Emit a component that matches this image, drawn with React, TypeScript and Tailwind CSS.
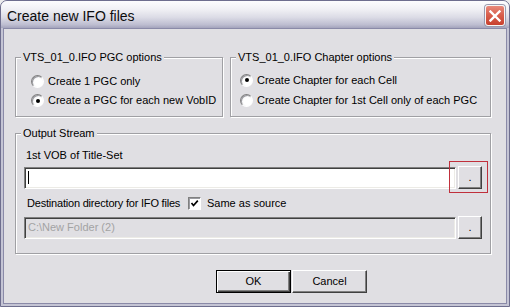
import React from "react";

const FONT = "font-['Liberation_Sans',Arial,sans-serif]";

function Radio({ checked, label }: { checked?: boolean; label: string }) {
  return (
    <div className="flex items-center gap-[4px]">
      <span className="flex h-[13px] w-[13px] items-center justify-center rounded-full border border-t-[#808080] border-l-[#808080] border-b-white border-r-white bg-[radial-gradient(circle_at_60%_60%,#ffffff_40%,#e4e4e8_100%)] shadow-[inset_1px_1px_0_#9a9aa0]">
        {checked && <span className="h-[4px] w-[4px] rounded-full bg-black" />}
      </span>
      <span className="leading-[13px] whitespace-nowrap">{label}</span>
    </div>
  );
}

function GroupBox({
  title,
  className,
  children,
}: {
  title: string;
  className: string;
  children: React.ReactNode;
}) {
  return (
    <div
      className={`relative border border-[#a0a0a4] shadow-[1px_1px_0_#ffffff,inset_1px_1px_0_#ffffff] ${className}`}
    >
      <span className="absolute -top-[7px] left-[5px] bg-[#e0dfe3] px-[2px] leading-[13px] whitespace-nowrap">
        {title}
      </span>
      {children}
    </div>
  );
}

function DotButton() {
  return (
    <button
      type="button"
      className="ml-[2px] flex h-[23px] w-[24px] items-center justify-center border border-t-white border-l-white border-b-[#404040] border-r-[#404040] bg-[#e0dfe3] pb-[1px] leading-[13px] shadow-[inset_-1px_-1px_0_#808080]"
    >
      .
    </button>
  );
}

function Sunken({
  disabled,
  children,
}: {
  disabled?: boolean;
  children?: React.ReactNode;
}) {
  return (
    <div
      className={`ml-[8px] flex h-[22px] w-[432px] items-center border border-t-[#808080] border-l-[#808080] border-b-white border-r-white pl-[3px] shadow-[inset_1px_1px_0_#404040,inset_-1px_-1px_0_#ecebe6] ${
        disabled ? "bg-[#e0dfe3] text-[#a3a3a3]" : "bg-white"
      }`}
    >
      {children}
    </div>
  );
}

export default function App() {
  return (
    <div className={`h-[307px] w-[510px] bg-[#ececec] text-[11px] text-black ${FONT}`}>
      <div className="flex h-[307px] w-[510px] flex-col rounded-t-[7px] border border-[#6e6e8e] bg-[#c4c4d4]">
        {/* title bar */}
        <div className="flex h-[27px] items-start justify-between rounded-t-[6px] bg-[linear-gradient(to_bottom,#fdfdfe_0%,#f1f1f5_30%,#dcdce6_60%,#bdbdd0_88%,#a4a4bc_100%)] pl-[6px] pr-[4px]">
          <span className="mt-[7px] text-[14px] leading-[16px] text-[#0c0c0c]">
            Create new IFO files
          </span>
          <button
            type="button"
            className="mt-[4px] flex h-[21px] w-[20px] items-center justify-center rounded-[3px] border border-[#f6f6f6] bg-[linear-gradient(to_bottom,#e88a7c_0%,#d9604e_45%,#c8402e_100%)] shadow-[0_0_0_1px_#9a9aae]"
          >
            <svg width="12" height="12" viewBox="0 0 12 12">
              <path d="M1.5 1.5 L10.5 10.5 M10.5 1.5 L1.5 10.5" stroke="#ffffff" strokeWidth="2.4" strokeLinecap="square" />
            </svg>
          </button>
        </div>

        {/* client area */}
        <div className="mx-[2px] mb-[2px] flex flex-1 flex-col border border-[#8a8aa8] bg-[#e0dfe3] pl-[11px]">
          <div className="mt-[28px] flex gap-[7px]">
            <GroupBox title="VTS_01_0.IFO PGC options" className="h-[60px] w-[208px]">
              <div className="flex flex-col pl-[15px] pt-[14px]">
                <div className="flex h-[19px] items-center">
                  <Radio label="Create 1 PGC only" />
                </div>
                <div className="flex h-[19px] items-center">
                  <Radio checked label="Create a PGC for each new VobID" />
                </div>
              </div>
            </GroupBox>
            <GroupBox title="VTS_01_0.IFO Chapter options" className="h-[60px] w-[261px]">
              <div className="flex flex-col pl-[9px] pt-[12px]">
                <div className="flex h-[20px] items-center">
                  <Radio checked label="Create Chapter for each Cell" />
                </div>
                <div className="flex h-[20px] items-center">
                  <Radio label="Create Chapter for 1st Cell only of each PGC" />
                </div>
              </div>
            </GroupBox>
          </div>

          <GroupBox title="Output Stream" className="mt-[16px] h-[121px] w-[476px]">
            <div className="flex flex-col pt-[15px]">
              <span className="ml-[10px] leading-[13px]">1st VOB of Title-Set</span>
              <div className="mt-[4px] flex h-[23px] items-center">
                <Sunken>
                  <span className="h-[13px] w-[1px] bg-black" />
                </Sunken>
                <div className="relative">
                  <DotButton />
                  <span className="absolute -left-[7px] -top-[5px] z-10 h-[32px] w-[39px] border border-[#c0303c]" />
                </div>
              </div>
              <div className="mt-[7px] flex h-[14px] items-center">
                <span className="ml-[11px] w-[161px] leading-[13px] tracking-[-0.2px] whitespace-nowrap">
                  Destination directory for IFO files
                </span>
                <span className="flex h-[13px] w-[13px] items-center justify-center border border-t-[#808080] border-l-[#808080] border-b-white border-r-white bg-white shadow-[inset_1px_1px_0_#9a9aa0]">
                  <svg width="9" height="9" viewBox="0 0 9 9">
                    <polyline points="1.5,4 3.5,6.5 7.8,1.6" fill="none" stroke="#000" strokeWidth="1.7" />
                  </svg>
                </span>
                <span className="ml-[6px] leading-[13px]">Same as source</span>
              </div>
              <div className="mt-[6px] flex h-[23px] items-center">
                <Sunken disabled>
                  <span className="leading-[13px]">C:\New Folder (2)</span>
                </Sunken>
                <DotButton />
              </div>
            </div>
          </GroupBox>

          <div className="ml-[201px] mt-[16px] flex gap-[1px]">
            <button
              type="button"
              className="h-[23px] w-[75px] border border-black bg-[#e0dfe3] leading-[13px] shadow-[inset_1px_1px_0_#ffffff,inset_-1px_-1px_0_#404040,inset_-2px_-2px_0_#808080]"
            >
              OK
            </button>
            <button
              type="button"
              className="h-[23px] w-[75px] border border-t-white border-l-white border-b-[#404040] border-r-[#404040] bg-[#e0dfe3] leading-[13px] shadow-[inset_-1px_-1px_0_#808080]"
            >
              Cancel
            </button>
          </div>
        </div>
      </div>
    </div>
  );
}
